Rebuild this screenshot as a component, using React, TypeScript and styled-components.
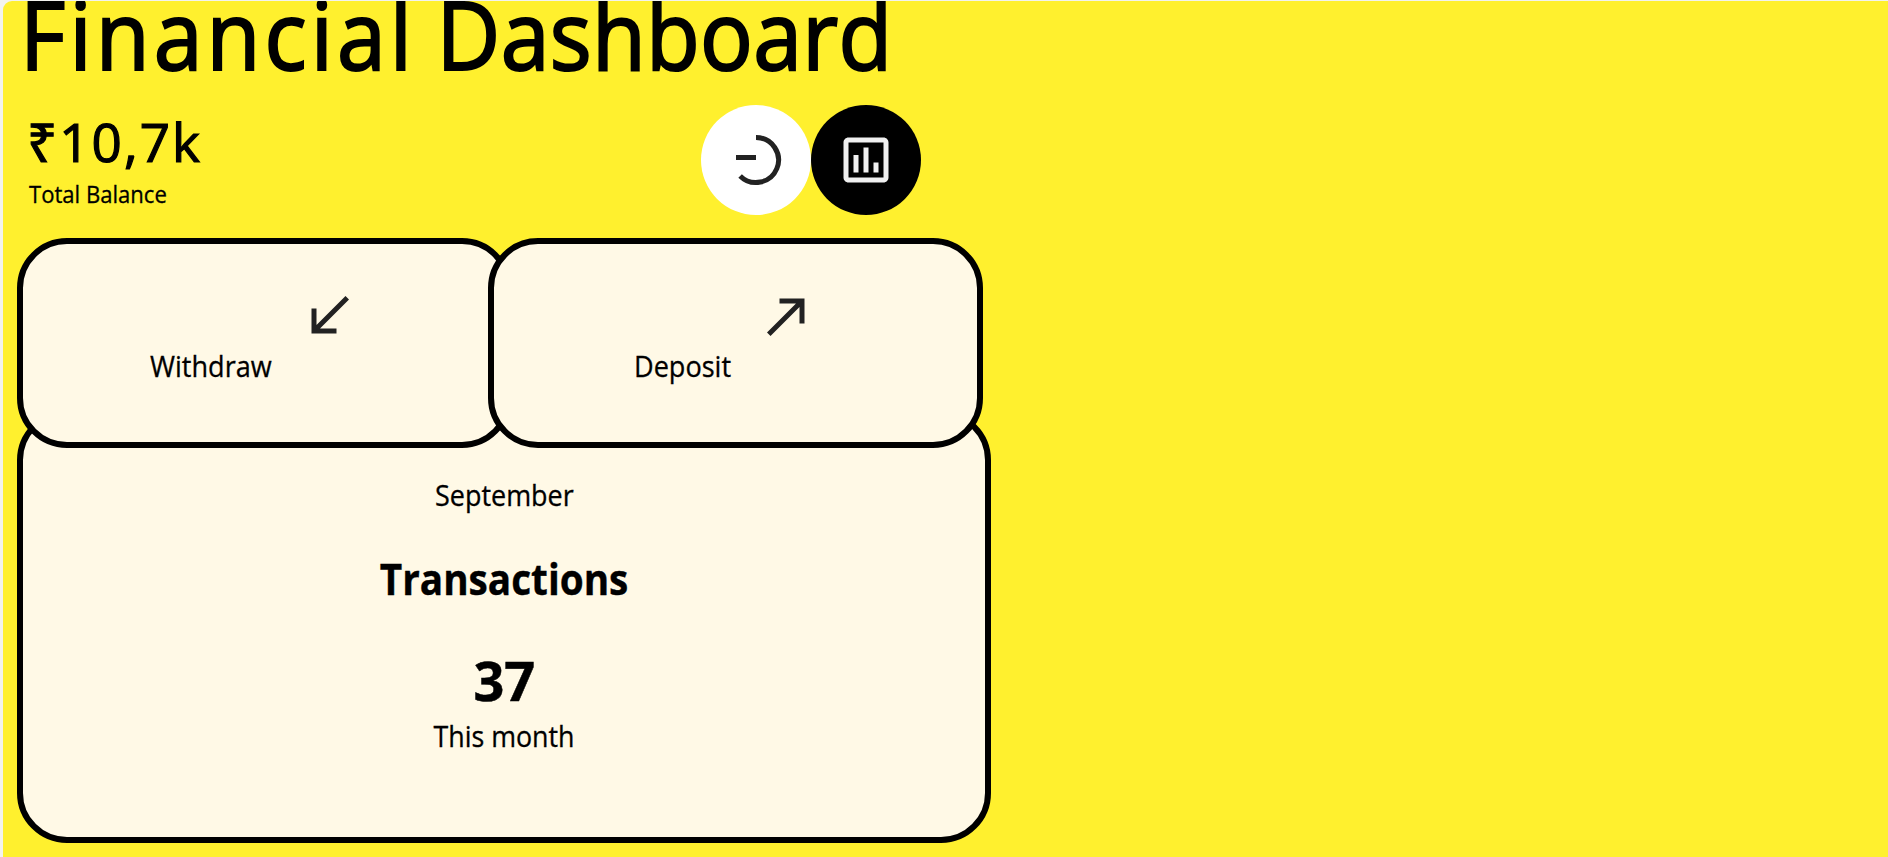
import React from "react";
import styled, { createGlobalStyle } from "styled-components";

const GlobalStyle = createGlobalStyle`
  html, body { margin: 0; background: #f3f3ee; }
  body { overflow: hidden; }
`;

const Page = styled.main`
  box-sizing: border-box;
  width: 100vw;
  height: 100vh;
  padding: 1px 0 0 3px;
  font-family: "Open Sans", "Noto Sans", sans-serif;
  color: #000;
`;

const Screen = styled.div`
  box-sizing: border-box;
  height: 100%;
  padding-left: 14px;
  background: #fff02e;
  border-top-left-radius: 9px;
  overflow: hidden;
`;

interface TextProps {
  $size: number;
  $line: number;
  $weight?: number;
  $scale?: number;
  $spacing?: number;
  $stroke?: number;
  $origin?: string;
}

const Text = styled.div<TextProps>`
  width: max-content;
  font-size: ${(p) => p.$size}px;
  line-height: ${(p) => p.$line}px;
  font-weight: ${(p) => p.$weight ?? 400};
  letter-spacing: ${(p) => p.$spacing ?? 0}px;
  -webkit-text-stroke: ${(p) => p.$stroke ?? 0}px currentColor;
  white-space: nowrap;
  transform: scaleX(${(p) => p.$scale ?? 1});
  transform-origin: ${(p) => p.$origin ?? "left"} center;
`;

const Title = styled(Text).attrs({ as: "h1" })`
  margin: 0 0 0 3px;
  word-spacing: -2.5px;
`;

const Word = styled.span<{ $spacing: number }>`
  letter-spacing: ${(p) => p.$spacing}px;
`;

const Header = styled.header`
  display: flex;
  justify-content: space-between;
  width: 904px;
  height: 110px;
  margin-top: 39px;
`;

const Balance = styled.div`
  display: flex;
  flex-direction: column;
  gap: 7px;
  padding: 7px 0 0 10px;
`;

const BalanceLabel = styled(Text)`
  margin-left: 2px;
`;

const Actions = styled.div`
  display: flex;
`;

const RoundButton = styled.button<{ $dark?: boolean }>`
  display: grid;
  place-items: center;
  width: 110px;
  height: 110px;
  padding: 0;
  border: 0;
  border-radius: 50%;
  background: ${(p) => (p.$dark ? "#000" : "#fff")};
  color: ${(p) => (p.$dark ? "#f0f0f0" : "#222")};
`;

const Icon = styled.svg`
  display: block;
  width: 60px;
  height: 60px;
`;

const Panel = styled.section`
  box-sizing: border-box;
  border: 6px solid #000;
  border-radius: 50px;
  background: #fff9e6;
`;

const Cards = styled.div`
  position: relative;
  z-index: 1;
  display: flex;
  margin-top: 23px;
`;

const ActionCard = styled(Panel)<{ $iconLeft: number; $labelLeft: number }>`
  width: 495px;
  height: 210px;
  padding-top: 42px;
  color: #000;

  & + & {
    margin-left: -24px;
  }

  ${Icon} {
    margin-left: ${(p) => p.$iconLeft}px;
    color: #222;
  }

  ${Text} {
    margin: 2px 0 0 ${(p) => p.$labelLeft}px;
  }
`;

const Summary = styled(Panel)`
  display: flex;
  flex-direction: column;
  align-items: center;
  width: 974px;
  height: 433px;
  margin-top: -38px;
  padding-top: 61px;
`;

const Heading = styled(Text).attrs({ as: "h2" })`
  margin: 41px 0 47px;
`;

const Count = styled(Text)`
  margin-bottom: 7px;
`;

export default function App() {
  return (
    <>
      <GlobalStyle />
      <Page>
        <Screen>
          <Title $size={95} $line={65} $scale={0.925} $stroke={2.2}>
            <Word $spacing={4.4}>Financial</Word> <Word $spacing={0.3}>Dashboard</Word>
          </Title>
          <Header>
            <Balance>
              <Text $size={53} $line={60} $spacing={2} $stroke={1.2}>₹10,7k</Text>
              <BalanceLabel $size={23} $line={30} $scale={0.96} $stroke={0.3}>Total Balance</BalanceLabel>
            </Balance>
            <Actions>
              <RoundButton aria-label="Usage">
                <Icon viewBox="0 0 24 24" fill="none" stroke="currentColor" strokeWidth="2">
                  <path d="M12 3a9 9 0 1 1-6.36 15.36M4 11h8" />
                </Icon>
              </RoundButton>
              <RoundButton $dark aria-label="Statistics">
                <Icon viewBox="0 0 24 24" fill="currentColor">
                  <path d="M19 3H5c-1.1 0-2 .9-2 2v14c0 1.1.9 2 2 2h14c1.1 0 2-.9 2-2V5c0-1.1-.9-2-2-2zm0 16H5V5h14v14zM7 10h2v7H7zm4-3h2v10h-2zm4 6h2v4h-2z" />
                </Icon>
              </RoundButton>
            </Actions>
          </Header>
          <Cards>
            <ActionCard $iconLeft={275.5} $labelLeft={127}>
              <Icon viewBox="0 0 24 24" fill="currentColor">
                <path d="M20 5.41 18.59 4 7 15.59V9H5v10h10v-2H8.41z" />
              </Icon>
              <Text $size={28.5} $line={36} $scale={0.95} $stroke={0.3}>Withdraw</Text>
            </ActionCard>
            <ActionCard $iconLeft={263} $labelLeft={139.5}>
              <Icon viewBox="0 0 24 24" fill="currentColor">
                <path d="M9 5v2h6.59L4 18.59 5.41 20 17 8.41V15h2V5z" />
              </Icon>
              <Text $size={28.5} $line={36} $scale={0.95} $stroke={0.3}>Deposit</Text>
            </ActionCard>
          </Cards>
          <Summary>
            <Text $size={28.5} $line={36} $scale={0.945} $stroke={0.3} $origin="center">September</Text>
            <Heading $size={43} $line={50} $weight={700} $scale={0.9} $stroke={0.4} $origin="center">Transactions</Heading>
            <Count $size={53} $line={60} $weight={700} $scale={1.02} $stroke={0.5} $origin="center">37</Count>
            <Text $size={28.5} $line={36} $scale={0.94} $stroke={0.3} $origin="center">This month</Text>
          </Summary>
        </Screen>
      </Page>
    </>
  );
}
